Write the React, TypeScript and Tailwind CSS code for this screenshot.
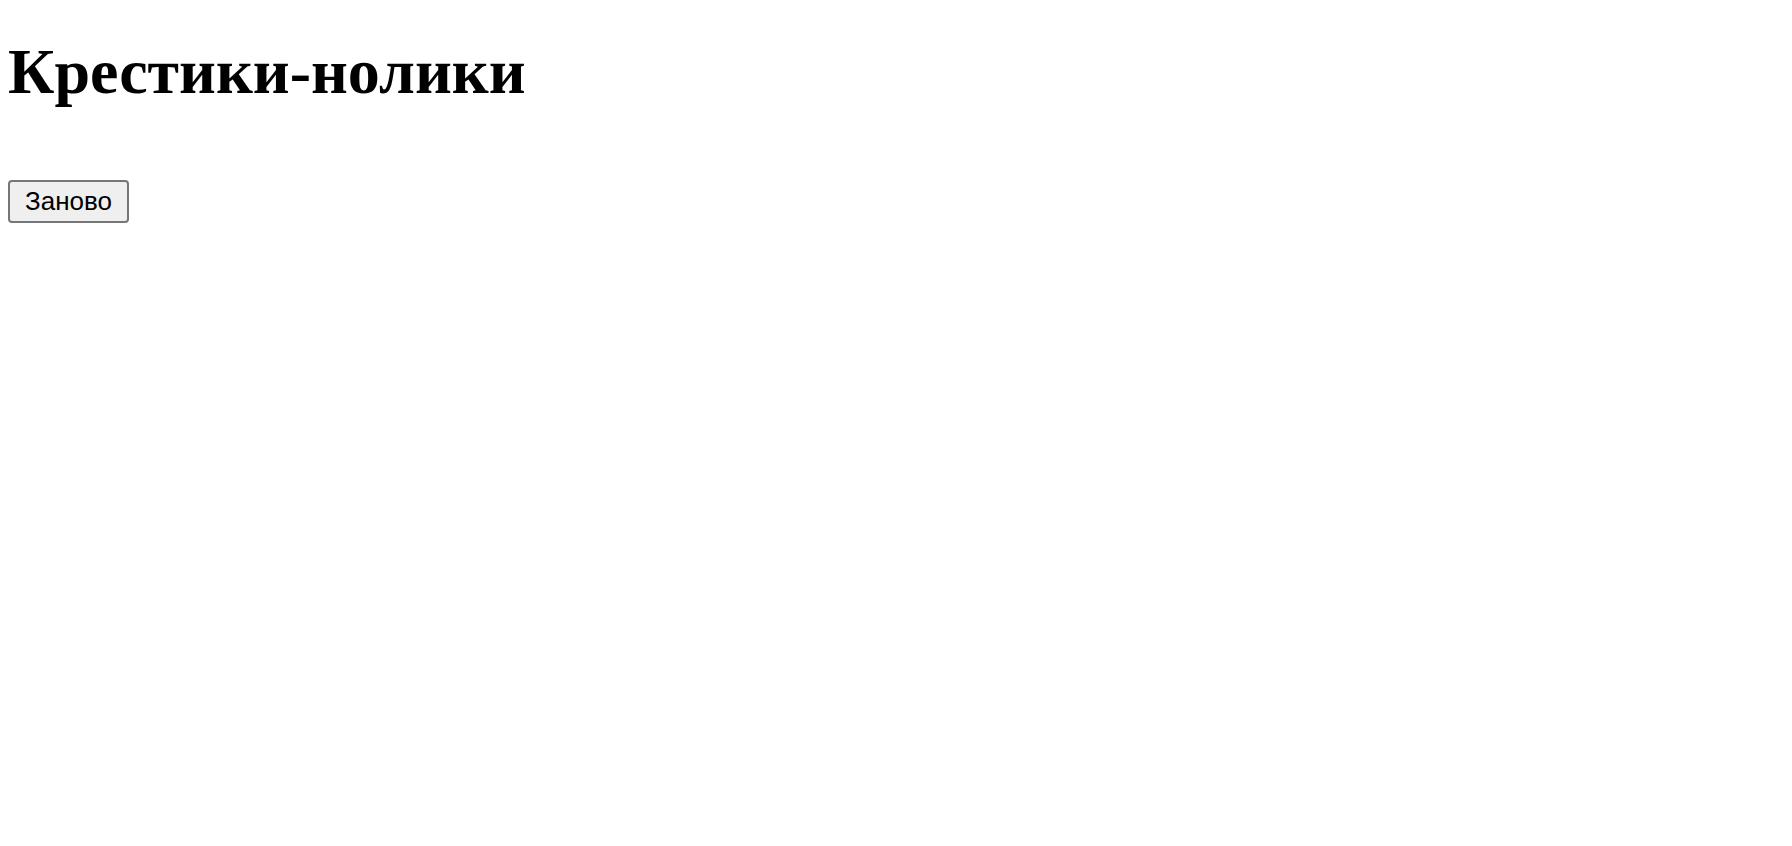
export default function App() {
  return (
    <div className="min-h-screen bg-white p-2 text-black">
      <h1 className="mt-[27px] mb-[71px] font-['Liberation_Serif','Times_New_Roman',serif] text-[64px] font-bold leading-[1.15]">
        Крестики-нолики
      </h1>
      <button
        type="button"
        className="rounded-[4px] border-2 border-[#767676] bg-[#efefef] px-[15px] py-[5px] font-['Liberation_Sans',Arial,sans-serif] text-[26px] leading-[1.15] text-black"
      >
        Заново
      </button>
    </div>
  );
}
